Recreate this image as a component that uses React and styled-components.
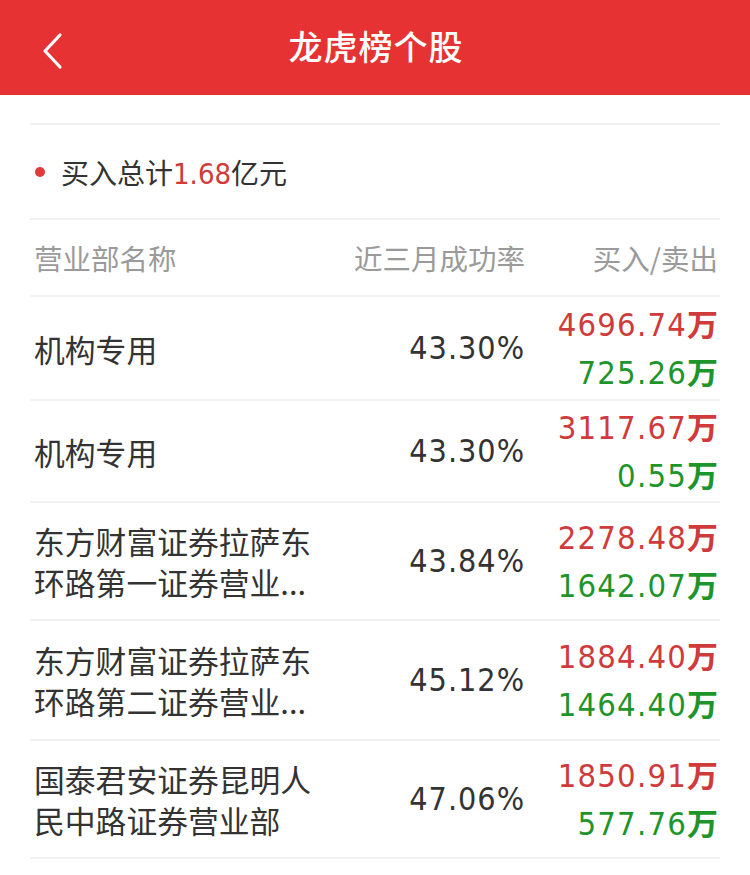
import React from "react";
import styled, { createGlobalStyle } from "styled-components";

const Global = createGlobalStyle`
  html, body { margin: 0; padding: 0; background: #fff; }
  body { font-family: "Noto Sans CJK SC", "Noto Sans", sans-serif; }
  * { box-sizing: border-box; }
`;

const Page = styled.div`
  width: 750px;
  min-height: 875px;
  background: #fff;
`;

const Header = styled.header`
  height: 95px;
  background: #e63232;
  display: flex;
  align-items: center;
  justify-content: center;
  position: relative;
`;

const Back = styled.div`
  position: absolute;
  left: 40px;
  top: 30px;
  width: 30px;
  height: 42px;
  display: flex;
  align-items: center;
`;

const Title = styled.h1`
  margin: 0 0 4px 2px;
  color: #fff;
  font-size: 34px;
  font-weight: 500;
  letter-spacing: 1px;
`;

const Body = styled.div`
  padding: 0 30px;
`;

const Spacer = styled.div`
  height: 30px;
  border-bottom: 2px solid #f1f1f1;
`;

const Summary = styled.div`
  height: 95px;
  display: flex;
  align-items: center;
  gap: 16px;
  padding-left: 5px;
  border-bottom: 2px solid #f1f1f1;
  font-size: 28px;
  color: #333;
`;

const Dot = styled.span`
  width: 10px;
  height: 10px;
  border-radius: 50%;
  background: #e03a3a;
`;

const Red = styled.span`
  color: #d03a3a;
  font-family: "DejaVu Sans Condensed", "Noto Sans", sans-serif;
  font-size: 29px;
`;

const Grid = `
  display: grid;
  grid-template-columns: 290px minmax(0, 1fr) 193px;
  align-items: center;
  padding-left: 4px;
  padding-right: 2px;
`;

const HeadRow = styled.div`
  ${Grid}
  height: 77px;
  border-bottom: 2px solid #f1f1f1;
  color: #9a9a9a;
  font-size: 28.5px;
`;

const Right = styled.div`
  text-align: right;
`;

const Row = styled.div`
  ${Grid}
  height: ${(p) => p.$h}px;
  border-bottom: 2px solid #f1f1f1;
`;

const Name = styled.div`
  font-size: 30.8px;
  line-height: 41px;
  color: #333;
`;

const Rate = styled.div`
  text-align: right;
  font-family: "DejaVu Sans Condensed", "Noto Sans", sans-serif;
  font-size: 32px;
  letter-spacing: 1px;
  color: #333;
`;

const Amounts = styled.div`
  display: flex;
  flex-direction: column;
  align-items: flex-end;
  line-height: 45px;
`;

const Amount = styled.div`
  font-family: "DejaVu Sans Condensed", "Noto Sans", sans-serif;
  font-size: 32.5px;
  letter-spacing: 1.2px;
  color: ${(p) => (p.$buy ? "#cf3b3b" : "#1e952a")};
`;

const Unit = styled.span`
  font-family: "Noto Sans CJK SC", sans-serif;
  font-weight: 700;
  font-size: 31px;
  letter-spacing: 0;
`;

const rows = [
  { name: "机构专用", rate: "43.30%", buy: "4696.74", sell: "725.26", h: 104 },
  { name: "机构专用", rate: "43.30%", buy: "3117.67", sell: "0.55", h: 102 },
  { name: "东方财富证券拉萨东环路第一证券营业...", rate: "43.84%", buy: "2278.48", sell: "1642.07", h: 118 },
  { name: "东方财富证券拉萨东环路第二证券营业...", rate: "45.12%", buy: "1884.40", sell: "1464.40", h: 120 },
  { name: "国泰君安证券昆明人民中路证券营业部", rate: "47.06%", buy: "1850.91", sell: "577.76", h: 118 },
];

export default function App() {
  return (
    <Page>
      <Global />
      <Header>
        <Back>
          <svg width="24" height="38" viewBox="0 0 24 38">
            <path d="M20 3 L5 19 L20 35" fill="none" stroke="#fff" strokeWidth="3.2" strokeLinecap="round" strokeLinejoin="round" />
          </svg>
        </Back>
        <Title>龙虎榜个股</Title>
      </Header>
      <Body>
        <Spacer />
        <Summary>
          <Dot />
          <span>
            买入总计<Red>1.68</Red>亿元
          </span>
        </Summary>
        <HeadRow>
          <div>营业部名称</div>
          <Right>近三月成功率</Right>
          <Right>买入/卖出</Right>
        </HeadRow>
        {rows.map((r, i) => (
          <Row key={i} $h={r.h}>
            <Name>{r.name}</Name>
            <Rate>{r.rate}</Rate>
            <Amounts>
              <Amount $buy>
                {r.buy}
                <Unit>万</Unit>
              </Amount>
              <Amount>
                {r.sell}
                <Unit>万</Unit>
              </Amount>
            </Amounts>
          </Row>
        ))}
      </Body>
    </Page>
  );
}
